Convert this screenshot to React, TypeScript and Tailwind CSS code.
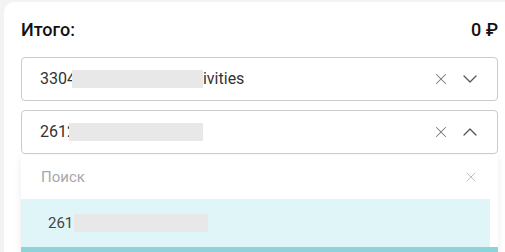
import { X, ChevronDown, ChevronUp } from "lucide-react";

function Redacted({ width, className = "" }: { width: string; className?: string }) {
  return <span className={`inline-block h-[18px] bg-[#e8e8e8] align-middle ${width} ${className}`} />;
}

function SelectBox({ children, open = false }: { children: React.ReactNode; open?: boolean }) {
  return (
    <div className="flex h-[44px] w-[477px] items-center rounded-[4px] border border-[#cbcbcb] bg-white pl-[18px] pr-[15px]">
      <div className="flex flex-1 items-center text-[16px] text-[#333]">{children}</div>
      <X className="h-[18px] w-[18px] text-[#777]" strokeWidth={1.4} />
      <span className="ml-[8px]">
        {open ? (
          <ChevronUp className="h-[24px] w-[24px] text-[#555]" strokeWidth={1.3} />
        ) : (
          <ChevronDown className="h-[24px] w-[24px] text-[#555]" strokeWidth={1.3} />
        )}
      </span>
    </div>
  );
}

export default function App() {
  return (
    <div
      className="h-[252px] w-[505px] overflow-hidden bg-[#f3f3f6] pl-[4px] pt-[2px]"
      style={{ fontFamily: "Roboto, 'Noto Sans', sans-serif" }}
    >
      <div className="h-full rounded-tl-[10px] bg-white pl-[17px] pt-[16px]">
        <div className="flex w-[477px] items-center justify-between text-[18px] font-medium leading-[24px] text-[#111]">
          <span>Итого:</span>
          <span>0 ₽</span>
        </div>

        <div className="mt-[15px] flex flex-col gap-[9px]">
          <SelectBox>
            <span>3304</span>
            <Redacted width="w-[131px]" className="-ml-[4px]" />
            <span>ivities</span>
          </SelectBox>
          <SelectBox open>
            <span>2612</span>
            <Redacted width="w-[134px]" className="-ml-[7px]" />
          </SelectBox>
        </div>

        <div className="mt-[1px] w-[477px] bg-white shadow-[0_2px_8px_rgba(0,0,0,0.08)]">
          <div className="flex h-[44px] items-center pl-[20px] pr-[19px]">
            <span className="flex-1 text-[15px] text-[#a8a8a8]">Поиск</span>
            <X className="h-[16px] w-[16px] text-[#b5b5b5]" strokeWidth={1.3} />
          </div>
          <div className="flex h-[48px] w-[469px] items-center bg-[#e0f5f8] pl-[27px] text-[15px] text-[#444]">
            <span>261</span>
            <Redacted width="w-[134px]" className="ml-[1px]" />
          </div>
          <div className="h-[8px] bg-[#8ed3d7]" />
        </div>
      </div>
    </div>
  );
}
